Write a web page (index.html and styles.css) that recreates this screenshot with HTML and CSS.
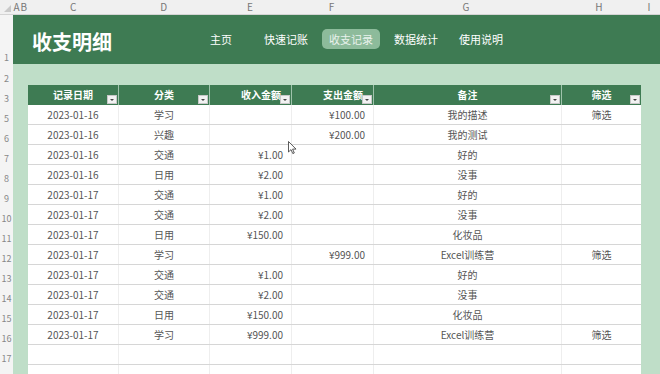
FILE: index.html
```html
<!DOCTYPE html>
<html lang="zh-CN">
<head>
<meta charset="utf-8">
<title>收支明细</title>
<link rel="stylesheet" href="styles.css">
</head>
<body>
<div class="sheet">
  <div class="colbar">
    <div class="corner"><span class="corner-tri"></span></div>
    <div class="col w-a">A</div>
    <div class="col w-b">B</div>
    <div class="col w-c">C</div>
    <div class="col w-d">D</div>
    <div class="col w-e">E</div>
    <div class="col w-f">F</div>
    <div class="col w-g">G</div>
    <div class="col w-h">H</div>
    <div class="col w-i">I</div>
  </div>
  <div class="body">
    <div class="rownums">
      <div class="rn r-band">1</div>
      <div class="rn r-gap">2</div>
      <div class="rn">3</div>
      <div class="rn">5</div>
      <div class="rn">6</div>
      <div class="rn">7</div>
      <div class="rn">8</div>
      <div class="rn">9</div>
      <div class="rn">10</div>
      <div class="rn">11</div>
      <div class="rn">12</div>
      <div class="rn">13</div>
      <div class="rn">14</div>
      <div class="rn">15</div>
      <div class="rn">16</div>
      <div class="rn">17</div>
      <div class="rn"></div>
    </div>
    <div class="canvas">
      <header class="band">
        <h1 class="title">收支明细</h1>
        <nav class="nav">
          <a class="nav-item">主页</a>
          <a class="nav-item">快速记账</a>
          <a class="nav-item active">收支记录</a>
          <a class="nav-item">数据统计</a>
          <a class="nav-item">使用说明</a>
        </nav>
      </header>
      <div class="gap-row"></div>
      <div class="table">
        <div class="row head">
          <div class="hc">记录日期<span class="fbtn"></span></div>
          <div class="hc">分类<span class="fbtn"></span></div>
          <div class="hc right">收入金额<span class="fbtn"></span></div>
          <div class="hc right">支出金额<span class="fbtn"></span></div>
          <div class="hc">备注<span class="fbtn"></span></div>
          <div class="hc">筛选<span class="fbtn"></span></div>
        </div>
        <div class="row"><div class="c">2023-01-16</div><div class="c">学习</div><div class="c num"></div><div class="c num">¥100.00</div><div class="c">我的描述</div><div class="c">筛选</div></div>
        <div class="row"><div class="c">2023-01-16</div><div class="c">兴趣</div><div class="c num"></div><div class="c num">¥200.00</div><div class="c">我的测试</div><div class="c"></div></div>
        <div class="row"><div class="c">2023-01-16</div><div class="c">交通</div><div class="c num">¥1.00</div><div class="c num"></div><div class="c">好的</div><div class="c"></div></div>
        <div class="row"><div class="c">2023-01-16</div><div class="c">日用</div><div class="c num">¥2.00</div><div class="c num"></div><div class="c">没事</div><div class="c"></div></div>
        <div class="row"><div class="c">2023-01-17</div><div class="c">交通</div><div class="c num">¥1.00</div><div class="c num"></div><div class="c">好的</div><div class="c"></div></div>
        <div class="row"><div class="c">2023-01-17</div><div class="c">交通</div><div class="c num">¥2.00</div><div class="c num"></div><div class="c">没事</div><div class="c"></div></div>
        <div class="row"><div class="c">2023-01-17</div><div class="c">日用</div><div class="c num">¥150.00</div><div class="c num"></div><div class="c">化妆品</div><div class="c"></div></div>
        <div class="row"><div class="c">2023-01-17</div><div class="c">学习</div><div class="c num"></div><div class="c num">¥999.00</div><div class="c">Excel训练营</div><div class="c">筛选</div></div>
        <div class="row"><div class="c">2023-01-17</div><div class="c">交通</div><div class="c num">¥1.00</div><div class="c num"></div><div class="c">好的</div><div class="c"></div></div>
        <div class="row"><div class="c">2023-01-17</div><div class="c">交通</div><div class="c num">¥2.00</div><div class="c num"></div><div class="c">没事</div><div class="c"></div></div>
        <div class="row"><div class="c">2023-01-17</div><div class="c">日用</div><div class="c num">¥150.00</div><div class="c num"></div><div class="c">化妆品</div><div class="c"></div></div>
        <div class="row"><div class="c">2023-01-17</div><div class="c">学习</div><div class="c num">¥999.00</div><div class="c num"></div><div class="c">Excel训练营</div><div class="c">筛选</div></div>
        <div class="row"><div class="c"></div><div class="c"></div><div class="c"></div><div class="c"></div><div class="c"></div><div class="c"></div></div>
        <div class="row"><div class="c"></div><div class="c"></div><div class="c"></div><div class="c"></div><div class="c"></div><div class="c"></div></div>
      </div>
    </div>
    <svg class="cursor" width="9" height="14" viewBox="0 0 9 14"><path d="M0.5 0.5 L0.5 11 L3 8.6 L4.8 12.6 L6.3 12 L4.6 8.1 L8 8.1 Z" fill="#fff" stroke="#333" stroke-width="0.8"/></svg>
  </div>
</div>
</body>
</html>
```

FILE: styles.css
```css
* { box-sizing: border-box; margin: 0; padding: 0; }
html, body { width: 660px; height: 374px; overflow: hidden; background: #fff; }
body { font-family: "Noto Sans CJK SC", "Noto Sans", sans-serif; color: #555; }

.sheet { width: 660px; height: 374px; overflow: hidden; }

.colbar {
  display: flex;
  height: 15px;
  background: #f0f0f0;
  border-bottom: 1px solid #d4d4d4;
  font-size: 10px;
  line-height: 14px;
  color: #777;
}
.corner { width: 13px; position: relative; }
.corner-tri {
  position: absolute; right: 2px; bottom: 2px;
  width: 0; height: 0;
  border-left: 7px solid transparent;
  border-bottom: 7px solid #c9c9c9;
}
.col { text-align: center; }
.w-a { width: 7px; }
.w-b { width: 8px; }
.w-c { width: 91px; }
.w-d { width: 91px; }
.w-e { width: 82px; }
.w-f { width: 82px; }
.w-g { width: 188px; }
.w-h { width: 79px; }
.w-i { width: 22px; }

.body { display: flex; position: relative; }

.rownums { width: 13px; background: #f4f4f4; flex: none; }
.rn {
  height: 20px;
  font-size: 9px;
  color: #888;
  display: flex;
  align-items: flex-end;
  justify-content: center;
  line-height: 12px;
  padding-bottom: 0px;
}
.r-band { height: 49px; }
.r-gap { height: 21px; }

.canvas {
  width: 647px;
  background: #bfdec8;
  height: 360px;
}

.band {
  height: 49px;
  background: #3e7b53;
  display: flex;
  align-items: center;
  padding-left: 19px;
}
.title {
  width: 160px;
  font-size: 20px;
  font-weight: 700;
  color: #fff;
  letter-spacing: 0px;
  padding-top: 3px;
}
.nav { display: flex; gap: 7px; margin-top: -2px; }
.nav-item {
  width: 58px;
  height: 20px;
  border-radius: 5px;
  font-size: 11px;
  line-height: 20px;
  color: #fff;
  text-align: center;
}
.nav-item.active { background: #8dbb9b; color: #e9f2ec; }

.gap-row { height: 21px; }

.table { margin-left: 15px; width: 613px; background: #fff; }
.row {
  display: grid;
  grid-template-columns: 91px 91px 82px 82px 188px 79px;
  height: 20px;
  border-bottom: 1px solid #d6d6d6;
  font-size: 10px;
  line-height: 19px;
}
.c {
  text-align: center;
  border-right: 1px solid #eeeeee;
  white-space: nowrap;
  overflow: hidden;
}
.c:last-child { border-right: none; }
.c.num { text-align: right; padding-right: 8px; }

.row.head {
  background: #3e7b53;
  border-bottom: none;
  color: #fff;
  font-weight: 700;
}
.hc {
  position: relative;
  text-align: center;
  border-right: 1px solid #9fc3ab;
  line-height: 20px;
}
.hc:last-child { border-right: none; }
.hc.right { text-align: right; padding-right: 10px; }
.fbtn {
  position: absolute;
  right: 1px;
  bottom: 1px;
  width: 10px;
  height: 9px;
  background: #f2f2f2;
  border: 1px solid #c8c8c8;
}
.fbtn::after {
  content: "";
  position: absolute;
  left: 2px;
  top: 3px;
  border-left: 2px solid transparent;
  border-right: 2px solid transparent;
  border-top: 2px solid #444;
}

.cursor { position: absolute; left: 288px; top: 126px; }
```
